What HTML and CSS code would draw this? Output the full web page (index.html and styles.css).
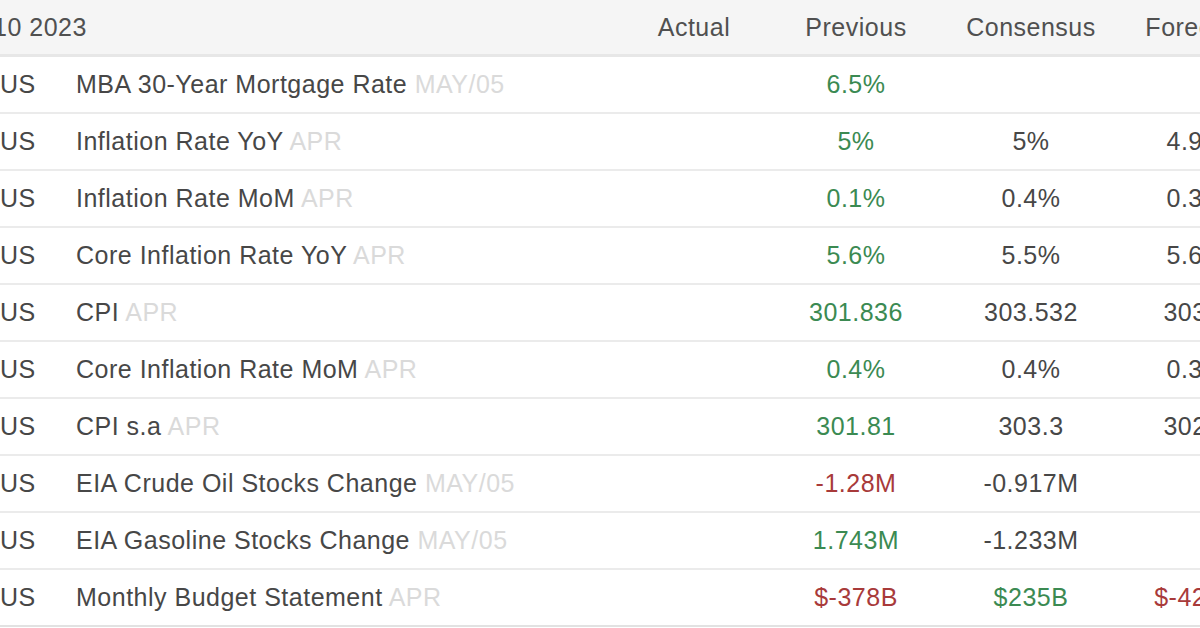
FILE: index.html
```html
<!DOCTYPE html>
<html>
<head>
<meta charset="utf-8">
<link rel="stylesheet" href="styles.css">
</head>
<body>
<div class="cal">
  <div class="row head">
    <div class="c-date head-date">10 2023</div>
    <div class="c-name"></div>
    <div class="c-val">Actual</div>
    <div class="c-val">Previous</div>
    <div class="c-val">Consensus</div>
    <div class="c-val">Forecast</div>
  </div>
  <div class="row">
    <div class="c-date">US</div>
    <div class="c-name">MBA 30-Year Mortgage Rate <span class="ref">MAY/05</span></div>
    <div class="c-val"></div>
    <div class="c-val up">6.5%</div>
    <div class="c-val"></div>
    <div class="c-val"></div>
  </div>
  <div class="row">
    <div class="c-date">US</div>
    <div class="c-name">Inflation Rate YoY <span class="ref">APR</span></div>
    <div class="c-val"></div>
    <div class="c-val up">5%</div>
    <div class="c-val">5%</div>
    <div class="c-val">4.9%</div>
  </div>
  <div class="row">
    <div class="c-date">US</div>
    <div class="c-name">Inflation Rate MoM <span class="ref">APR</span></div>
    <div class="c-val"></div>
    <div class="c-val up">0.1%</div>
    <div class="c-val">0.4%</div>
    <div class="c-val">0.3%</div>
  </div>
  <div class="row">
    <div class="c-date">US</div>
    <div class="c-name">Core Inflation Rate YoY <span class="ref">APR</span></div>
    <div class="c-val"></div>
    <div class="c-val up">5.6%</div>
    <div class="c-val">5.5%</div>
    <div class="c-val">5.6%</div>
  </div>
  <div class="row">
    <div class="c-date">US</div>
    <div class="c-name">CPI <span class="ref">APR</span></div>
    <div class="c-val"></div>
    <div class="c-val up">301.836</div>
    <div class="c-val">303.532</div>
    <div class="c-val">303.1</div>
  </div>
  <div class="row">
    <div class="c-date">US</div>
    <div class="c-name">Core Inflation Rate MoM <span class="ref">APR</span></div>
    <div class="c-val"></div>
    <div class="c-val up">0.4%</div>
    <div class="c-val">0.4%</div>
    <div class="c-val">0.3%</div>
  </div>
  <div class="row">
    <div class="c-date">US</div>
    <div class="c-name">CPI s.a <span class="ref">APR</span></div>
    <div class="c-val"></div>
    <div class="c-val up">301.81</div>
    <div class="c-val">303.3</div>
    <div class="c-val">302.9</div>
  </div>
  <div class="row">
    <div class="c-date">US</div>
    <div class="c-name">EIA Crude Oil Stocks Change <span class="ref">MAY/05</span></div>
    <div class="c-val"></div>
    <div class="c-val down">-1.28M</div>
    <div class="c-val">-0.917M</div>
    <div class="c-val"></div>
  </div>
  <div class="row">
    <div class="c-date">US</div>
    <div class="c-name">EIA Gasoline Stocks Change <span class="ref">MAY/05</span></div>
    <div class="c-val"></div>
    <div class="c-val up">1.743M</div>
    <div class="c-val">-1.233M</div>
    <div class="c-val"></div>
  </div>
  <div class="row">
    <div class="c-date">US</div>
    <div class="c-name">Monthly Budget Statement <span class="ref">APR</span></div>
    <div class="c-val"></div>
    <div class="c-val down">$-378B</div>
    <div class="c-val up">$235B</div>
    <div class="c-val down">$-420B</div>
  </div>
</div>
</body>
</html>
```

FILE: styles.css
```css
html, body {
  margin: 0;
  padding: 0;
  background: #ffffff;
  overflow: hidden;
}
body {
  width: 1200px;
  height: 628px;
  font-family: "Liberation Sans", Arial, sans-serif;
  font-size: 25px;
  letter-spacing: 0.5px;
  color: #474747;
}
.cal {
  width: 1268px;
}
.row {
  display: grid;
  grid-template-columns: 76px 538px 160px 164px 186px 144px;
  align-items: center;
  height: 55px;
  border-bottom: 2px solid #ebebeb;
  white-space: nowrap;
}
.head {
  height: 54px;
  background: #f5f5f5;
  border-bottom: 3px solid #e7e7e7;
  color: #505050;
}
.c-date, .c-name {
  text-align: left;
}
.head-date {
  margin-left: -7px;
}
.c-val {
  text-align: center;
}
.ref {
  color: #dadada;
}
.up {
  color: #3b8a52;
}
.down {
  color: #a83a3a;
}
.row:last-child {
  border-bottom-color: #e2e2e2;
}
```
